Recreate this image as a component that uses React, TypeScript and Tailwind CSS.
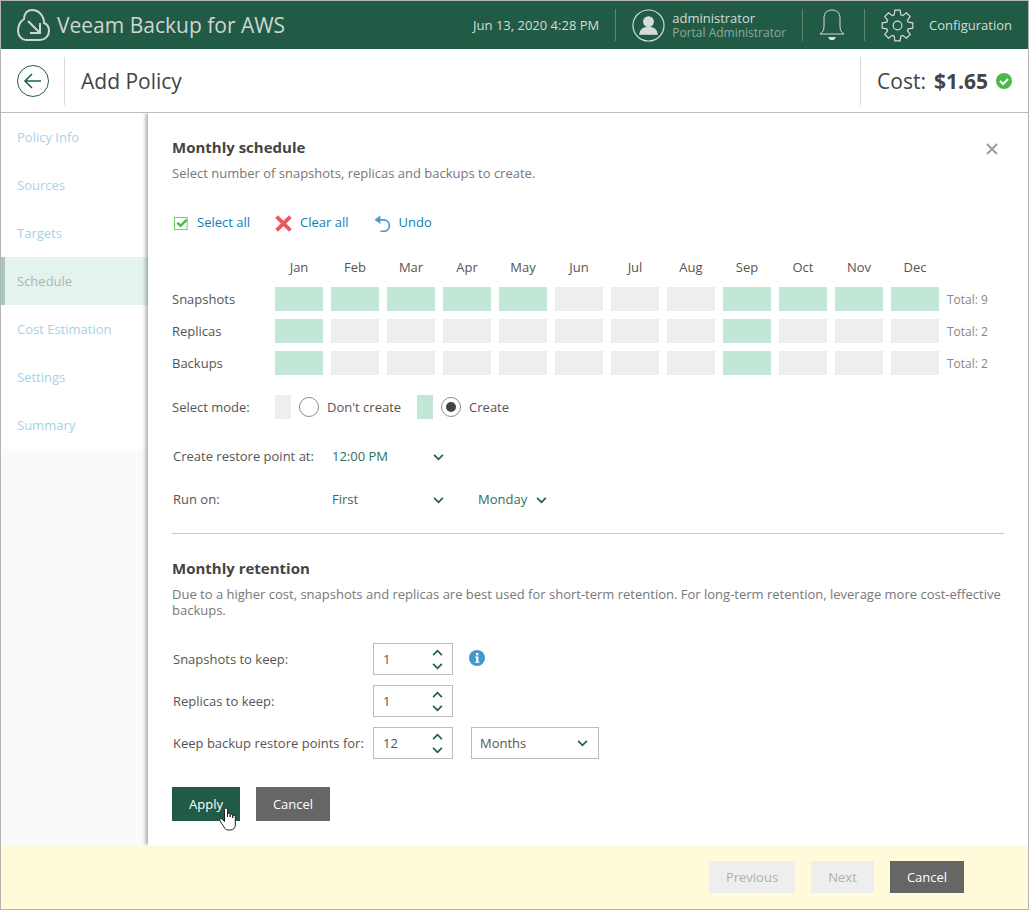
const months = ["Jan", "Feb", "Mar", "Apr", "May", "Jun", "Jul", "Aug", "Sep", "Oct", "Nov", "Dec"];

const rows = [
  { label: "Snapshots", on: [0, 1, 2, 3, 4, 8, 9, 10, 11], total: 9 },
  { label: "Replicas", on: [0, 8], total: 2 },
  { label: "Backups", on: [0, 8], total: 2 },
];

const steps = ["Policy Info", "Sources", "Targets", "Schedule", "Cost Estimation", "Settings", "Summary"];

// outline of an 8 tooth gear, centred on 17,17
const gearPath = () => {
  const pts: string[] = [];
  for (let i = 0; i < 8; i++) {
    const a = (i * Math.PI) / 4;
    const at = (r: number, d: number) => {
      const x = 17 + r * Math.sin(a + d);
      const y = 17 - r * Math.cos(a + d);
      return `${x.toFixed(2)} ${y.toFixed(2)}`;
    };
    pts.push(at(11.5, -0.3), at(16, -0.17), at(16, 0.17), at(11.5, 0.3));
  }
  return `M${pts.join("L")}z`;
};

const Chevron = ({ up = false, className = "" }: { up?: boolean; className?: string }) => (
  <svg viewBox="0 0 12 8" className={`h-[7px] w-[11px] ${className}`} fill="none" stroke="#22604a" strokeWidth="2">
    <path d={up ? "M1 7l5-5 5 5" : "M1 1l5 5 5-5"} />
  </svg>
);

const Spinner = ({ value }: { value: string }) => (
  <div className="flex h-[32px] w-[80px] items-center justify-between border border-[#bdbdbd] pl-[9px] pr-[9px] text-[#555]">
    <span className="pt-[2px]">{value}</span>
    <div className="flex flex-col gap-[7px]">
      <Chevron up />
      <Chevron />
    </div>
  </div>
);

const App = () => {
  return (
    <div className="flex h-[910px] w-[1029px] flex-col overflow-hidden border border-[#b4b4b4] bg-white font-['Open_Sans',sans-serif] text-[13px] text-[#555]">
      {/* top bar */}
      <header className="flex h-[48px] shrink-0 items-center bg-[#225b45] text-[#d5dcd8]">
        <svg viewBox="0 0 34 32" className="ml-[16px] h-[32px] w-[34px]" fill="none" stroke="#cfd6d2" strokeWidth="2">
          <path d="M9 31h14c5 0 9-4 9-9 0-4-2-7-5-8 0-7-5-13-12-13-5 0-8 4-8 9-3 2-6 6-6 12 0 5 4 9 8 9z" />
          <path d="M11 12l12 12M23 14v10H13" />
        </svg>
        <span className="ml-[6px] text-[21px] leading-none text-[#d0d6d3]">Veeam Backup for AWS</span>
        <span className="ml-auto pt-[1px] text-[13px]">Jun 13, 2020 4:28 PM</span>
        <div className="ml-[16px] h-[32px] w-px bg-[#5c8574]" />
        <svg viewBox="0 0 34 34" className="ml-[16px] h-[33px] w-[33px]" fill="none" stroke="#d5dcd8" strokeWidth="1.2">
          <circle cx="17" cy="17" r="16" />
          <circle cx="17" cy="13" r="5" fill="#d5dcd8" />
          <path d="M8 26c1-6 5-7 9-7s8 1 9 7z" fill="#d5dcd8" />
        </svg>
        <div className="ml-[7px] flex flex-col">
          <span className="text-[13px] leading-[15px]">administrator</span>
          <span className="text-[12px] leading-[14px] text-[#8fa89d]">Portal Administrator</span>
        </div>
        <div className="ml-[16px] h-[32px] w-px bg-[#5c8574]" />
        <svg viewBox="0 0 28 34" className="ml-[15px] h-[34px] w-[28px]" fill="none" stroke="#d5dcd8" strokeWidth="1">
          <path d="M2 26c3-2 4-4 4-8v-8c0-5 3-8 8-8s8 3 8 8v8c0 4 1 6 4 8z" />
          <path d="M10 29h8l-2 3h-4z" fill="#d5dcd8" stroke="none" />
        </svg>
        <div className="ml-[18px] h-[32px] w-px bg-[#5c8574]" />
        <svg viewBox="0 0 34 34" className="ml-[16px] h-[33px] w-[33px]" fill="none" stroke="#d5dcd8" strokeWidth="1.2">
          <path d={gearPath()} />
          <circle cx="17" cy="17" r="4.5" />
        </svg>
        <span className="ml-[15px] mr-[16px] pt-[1px] text-[13px]">Configuration</span>
      </header>

      {/* title row */}
      <div className="flex h-[64px] shrink-0 items-center border-b border-[#bdbdbd]">
        <svg viewBox="0 0 32 32" className="ml-[16px] h-[32px] w-[32px]" fill="none" stroke="#22604a">
          <circle cx="16" cy="16" r="15.5" />
          <path d="M8 16h16M15 9l-7 7 7 7" strokeWidth="1.6" />
        </svg>
        <div className="ml-[15px] h-[48px] w-px bg-[#d9d9d9]" />
        <h1 className="ml-[16px] pt-[2px] text-[21px] text-[#444]">Add Policy</h1>
        <div className="ml-auto flex h-[48px] items-center border-l border-[#d9d9d9] pl-[16px] pr-[16px]">
          <span className="pt-[2px] text-[21px] text-[#444]">Cost:</span>
          <span className="ml-[8px] pt-[2px] text-[21px] font-bold text-[#444]">$1.65</span>
          <svg viewBox="0 0 16 16" className="ml-[8px] h-[16px] w-[16px]">
            <circle cx="8" cy="8" r="8" fill="#4db848" />
            <path d="M4 8l3 3 5-5" fill="none" stroke="#fff" strokeWidth="2" />
          </svg>
        </div>
      </div>

      <div className="flex min-h-0 flex-1">
        {/* steps */}
        <nav className="w-[147px] shrink-0 bg-[#fafafa]">
          <div className="bg-white">
            {steps.map((step) =>
              step === "Schedule" ? (
                <div key={step} className="flex h-[48px] items-center border-l-[4px] border-[#a5c9b9] bg-[#e4f3ee] pl-[12px] pt-[2px] text-[#b2b2b2]">
                  {step}
                </div>
              ) : (
                <div key={step} className="flex h-[48px] items-center pl-[16px] pt-[2px] text-[#a5d2ea]">
                  {step}
                </div>
              )
            )}
          </div>
        </nav>

        {/* panel */}
        <main className="relative min-w-0 flex-1 bg-white pl-[24px] pr-[24px] shadow-[-2px_0_4px_rgba(0,0,0,0.35)] [clip-path:inset(0_0_0_-8px)]">
          <svg viewBox="0 0 12 12" className="absolute right-[30px] top-[30px] h-[12px] w-[12px]" stroke="#999" strokeWidth="1.8">
            <path d="M1 1l10 10M11 1L1 11" />
          </svg>
          <h2 className="mt-[23px] text-[15px] font-bold leading-[22px] text-[#444]">Monthly schedule</h2>
          <p className="mt-[6px] text-[13px] leading-[18px] text-[#777]">Select number of snapshots, replicas and backups to create.</p>

          <div className="mt-[32px] flex h-[18px] items-center text-[13px] text-[#0a7fb5]">
            <svg viewBox="0 0 16 16" className="ml-[2px] h-[15px] w-[15px]" fill="none">
              <rect x="0.5" y="1.5" width="13.5" height="13" stroke="#6cbf6a" />
              <path d="M3.5 7l3.5 3.5L13.5 4" stroke="#4db848" strokeWidth="2.6" />
            </svg>
            <span className="ml-[8px]">Select all</span>
            <svg viewBox="0 0 16 16" className="ml-[25px] h-[17px] w-[17px]" stroke="#e85b5b" strokeWidth="3.6">
              <path d="M1.5 1.5l13 13M14.5 1.5l-13 13" />
            </svg>
            <span className="ml-[8px]">Clear all</span>
            <svg viewBox="0 0 16 16" className="ml-[25px] h-[17px] w-[17px]" fill="none" stroke="#4d9bd0" strokeWidth="1.6">
              <path d="M4 4.5h5a5.5 5.5 0 0 1 0 11H6" />
              <path d="M0.5 4.5L6 0.5v8z" fill="#4d9bd0" stroke="none" />
            </svg>
            <span className="ml-[8px]">Undo</span>
          </div>

          {/* month grid */}
          <div className="mt-[26px]">
            <div className="flex h-[20px] items-center pl-[103px]">
              {months.map((m) => (
                <div key={m} className="mr-[8px] w-[48px] text-center text-[#555]">{m}</div>
              ))}
            </div>
            <div className="mt-[9px] flex flex-col gap-[8px]">
              {rows.map((row) => (
                <div key={row.label} className="flex h-[24px] items-center">
                  <span className="w-[103px] pt-[2px]">{row.label}</span>
                  {months.map((m, i) => (
                    <div key={m} className={`mr-[8px] h-[24px] w-[48px] ${row.on.includes(i) ? "bg-[#c2e7d7]" : "bg-[#eeeeee]"}`} />
                  ))}
                  <span className="pt-[2px] text-[12px] text-[#888]">Total: {row.total}</span>
                </div>
              ))}
            </div>
          </div>

          <div className="mt-[20px] flex h-[24px] items-center">
            <span className="w-[103px] pt-[2px]">Select mode:</span>
            <div className="h-[24px] w-[16px] bg-[#eeeeee]" />
            <div className="ml-[8px] h-[20px] w-[20px] rounded-full border border-[#8c8c8c]" />
            <span className="ml-[8px] pt-[2px]">Don't create</span>
            <div className="ml-[16px] h-[24px] w-[16px] bg-[#c2e7d7]" />
            <div className="ml-[8px] flex h-[20px] w-[20px] items-center justify-center rounded-full border border-[#8c8c8c]">
              <div className="h-[10px] w-[10px] rounded-full bg-[#444]" />
            </div>
            <span className="ml-[8px] pt-[2px]">Create</span>
          </div>

          <div className="mt-[29px] flex h-[18px] items-center pl-[1px]">
            <span className="w-[159px] whitespace-nowrap">Create restore point at:</span>
            <span className="w-[101px] text-[#2f7059]">12:00 PM</span>
            <Chevron />
          </div>

          <div className="mt-[25px] flex h-[18px] items-center pl-[1px]">
            <span className="w-[159px]">Run on:</span>
            <span className="w-[101px] text-[#2f7059]">First</span>
            <Chevron />
            <span className="ml-[34px] text-[#2f7059]">Monday</span>
            <Chevron className="ml-[9px]" />
          </div>

          <hr className="mt-[24px] border-[#c8c8c8]" />

          <h2 className="mt-[23px] text-[15px] font-bold leading-[22px] text-[#444]">Monthly retention</h2>
          <p className="mt-[7px] text-[13px] leading-[16px] text-[#777]">
            Due to a higher cost, snapshots and replicas are best used for short-term retention. For long-term retention, leverage more cost-effective backups.
          </p>

          <div className="mt-[25px] flex flex-col gap-[10px] pl-[1px]">
            <div className="flex items-center">
              <span className="w-[200px] pt-[2px]">Snapshots to keep:</span>
              <Spinner value="1" />
              <svg viewBox="0 0 16 16" className="ml-[16px] mt-[-2px] h-[16px] w-[16px]">
                <circle cx="8" cy="8" r="8" fill="#4596cc" />
                <path d="M6.2 6.5h3.2v5h1v1.2H6.2v-1.2h1v-3.8h-1z" fill="#fff" />
                <rect x="7" y="3" width="2.4" height="2.4" fill="#fff" />
              </svg>
            </div>
            <div className="flex items-center">
              <span className="w-[200px] pt-[2px]">Replicas to keep:</span>
              <Spinner value="1" />
            </div>
            <div className="flex items-center">
              <span className="w-[200px] pt-[2px]">Keep backup restore points for:</span>
              <Spinner value="12" />
              <div className="ml-[18px] flex h-[32px] w-[128px] items-center justify-between border border-[#bdbdbd] pl-[8px] pr-[10px] text-[#555]">
                <span className="pt-[2px]">Months</span>
                <Chevron />
              </div>
            </div>
          </div>

          <div className="relative mt-[28px] flex gap-[16px]">
            <button className="h-[34px] w-[68px] bg-[#225b45] pt-[2px] text-white">Apply</button>
            <button className="h-[34px] w-[74px] bg-[#666666] pt-[2px] text-white">Cancel</button>
            <svg viewBox="0 0 18 24" className="absolute left-[47px] top-[20px] h-[24px] w-[18px]" fill="#fff" stroke="#222" strokeWidth="1">
              <path d="M5.5 2.5a1.5 1.5 0 0 1 3 0V10V7.5a1.3 1.3 0 0 1 2.6 0V10V8.5a1.3 1.3 0 0 1 2.6 0V11V9.5a1.3 1.3 0 0 1 2.6 0V18c0 3-2 5-5 5H9c-2 0-3-1-4-3L1 14c-1-2 1-3 2.5-1.5l2 2z" />
            </svg>
          </div>
        </main>
      </div>

      {/* wizard footer */}
      <footer className="flex h-[64px] shrink-0 items-center justify-end bg-[#fffada] pr-[64px]">
        <button className="h-[32px] w-[86px] bg-[#eeeeee] pt-[2px] text-[#b0b0b0]">Previous</button>
        <button className="ml-[16px] h-[32px] w-[63px] bg-[#eeeeee] pt-[2px] text-[#b0b0b0]">Next</button>
        <button className="ml-[16px] h-[32px] w-[74px] bg-[#666666] pt-[2px] text-white">Cancel</button>
      </footer>
    </div>
  );
};

export default App;
